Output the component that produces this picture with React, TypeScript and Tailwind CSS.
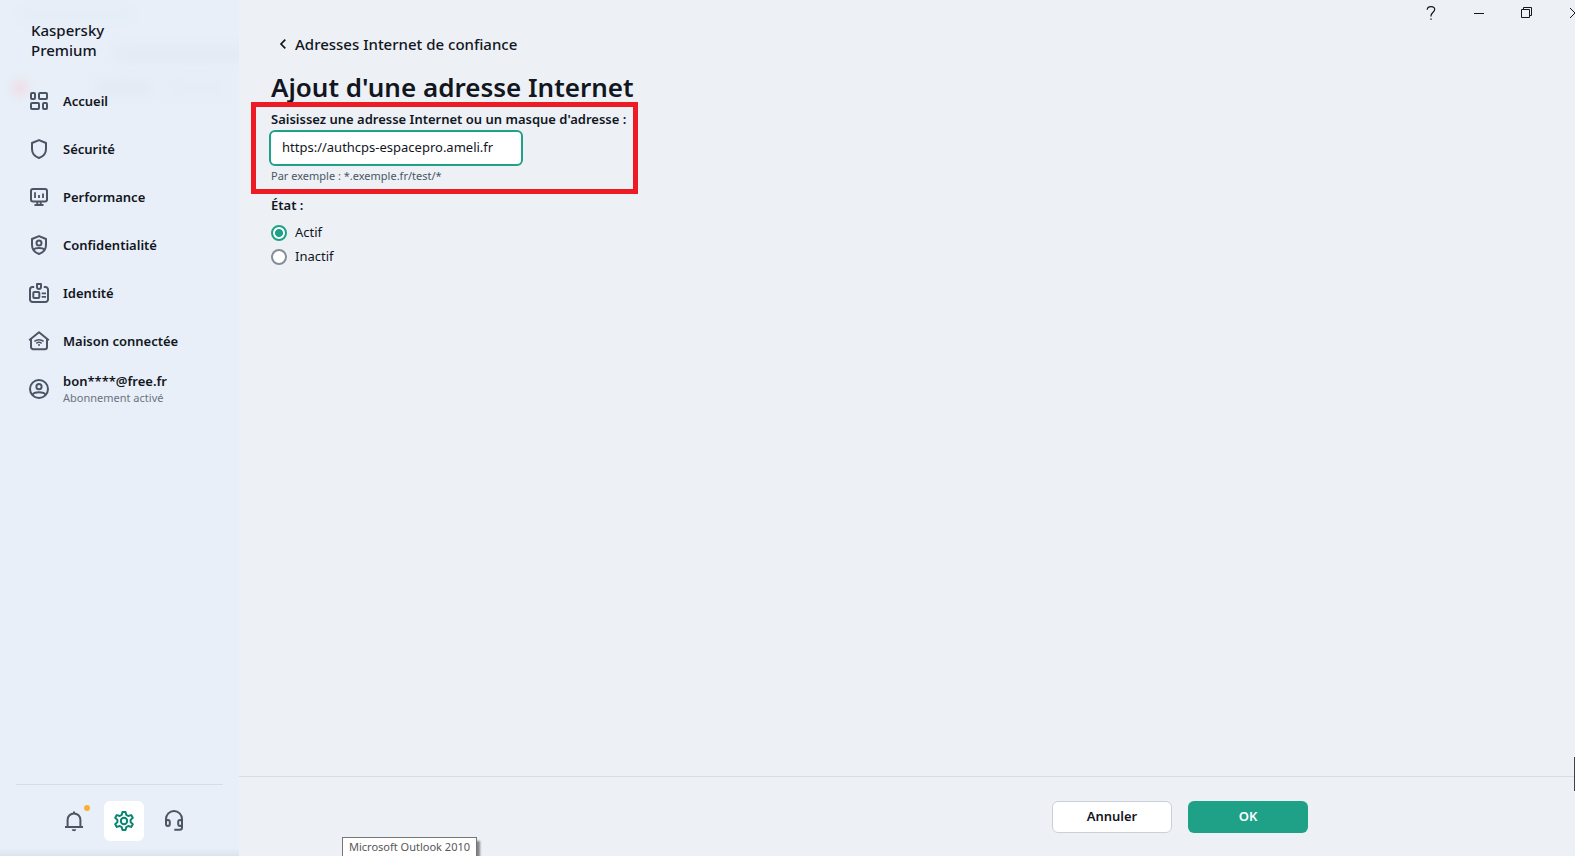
import { useState, type ReactNode } from "react";

const FONT = "font-['Noto_Sans','Open_Sans',sans-serif]";

function Icon({ children }: { children: ReactNode }) {
  return (
    <svg
      viewBox="0 0 24 24"
      className="size-6 shrink-0"
      fill="none"
      stroke="currentColor"
      strokeWidth="2"
      strokeLinejoin="round"
      aria-hidden="true"
    >
      {children}
    </svg>
  );
}

const HomeIcon = () => (
  <Icon>
    <rect x="4" y="4" width="4" height="6" rx="1" />
    <rect x="12" y="4" width="8" height="6" rx="1" />
    <rect x="4" y="14" width="8" height="6" rx="1" />
    <rect x="16" y="14" width="4" height="6" rx="1" />
  </Icon>
);

const SHIELD = "M12 3.1 L19 6 V12 C19 16.5 16 19.6 12 21 C8 19.6 5 16.5 5 12 V6 Z";

const ShieldIcon = () => (
  <Icon>
    <path d={SHIELD} />
  </Icon>
);

const MonitorIcon = () => (
  <Icon>
    <rect x="4" y="4" width="16" height="12.6" rx="2" />
    <path d="M8 7.3V13M12 10V13M16 8.5V13" strokeWidth="1.8" />
    <path d="M10.3 17V20M13.7 17V20M7.5 20H16.5" strokeWidth="1.9" />
  </Icon>
);

const PrivacyIcon = () => (
  <Icon>
    <path d={SHIELD} />
    <circle cx="12" cy="10" r="2.5" />
    <path d="M6.2 16.8C8.5 14.4 15.5 14.4 17.8 16.8" />
  </Icon>
);

const IdentityIcon = () => (
  <Icon>
    <path d="M7.2 6H5.5A2.5 2.5 0 0 0 3 8.5V18.5A2.5 2.5 0 0 0 5.5 21H18.5A2.5 2.5 0 0 0 21 18.5V8.5A2.5 2.5 0 0 0 18.5 6H16.8" />
    <path d="M10 3H14V6C14 7.2 13.2 8 12 8S10 7.2 10 6Z" />
    <rect x="6.3" y="11" width="6" height="6" rx="1" />
    <path d="M14.7 12.3H19M14.7 15.8H19" strokeWidth="1.8" />
  </Icon>
);

const SmartHomeIcon = () => (
  <Icon>
    <path d="M2.2 11.2L12 3.3L21.8 11.2M4 10V18A2.2 2.2 0 0 0 6.2 20.2H17.8A2.2 2.2 0 0 0 20 18V10" />
    <path d="M7.4 12.4C10 10.1 14 10.1 16.6 12.4M9.3 14.4C10.9 13.1 13.1 13.1 14.7 14.4" strokeWidth="1.5" />
    <circle cx="12" cy="16.1" r="1" fill="currentColor" stroke="none" />
  </Icon>
);

const AccountIcon = () => (
  <Icon>
    <circle cx="12" cy="12" r="9" />
    <circle cx="12" cy="9.7" r="2.6" />
    <path d="M5.5 17.8C7 14.4 17 14.4 18.5 17.8" />
  </Icon>
);

const BellIcon = () => (
  <Icon>
    <path d="M12 2.4V4.4M3 18H21M5.6 18V10.8A6.4 6.4 0 0 1 18.4 10.8V18" />
    <path d="M9.8 20.2H14.2A2.2 2 0 0 1 9.8 20.2Z" fill="currentColor" stroke="none" />
  </Icon>
);

const GearIcon = () => (
  <Icon>
    <path
      strokeWidth="2"
      d="M10.5 2.9H13.5L14.3 5.9L16.2 7L19.2 6.1L20.8 8.8L18.6 10.9V13.1L20.8 15.2L19.2 17.9L16.2 17L14.3 18.1L13.5 21.1H10.5L9.7 18.1L7.8 17L4.8 17.9L3.2 15.2L5.4 13.1V10.9L3.2 8.8L4.8 6.1L7.8 7L9.7 5.9Z"
    />
    <circle cx="12" cy="12" r="3.2" />
  </Icon>
);

const HeadsetIcon = () => (
  <Icon>
    <path d="M4 14V10A8 8 0 0 1 20 10V18.5A2.3 2.3 0 0 1 17.7 20.8H12.3" />
    <rect x="4" y="11" width="3.8" height="6" rx="1.9" />
    <rect x="16.2" y="11" width="3.8" height="6" rx="1.9" />
  </Icon>
);

const NAV = [
  { label: "Accueil", icon: <HomeIcon /> },
  { label: "Sécurité", icon: <ShieldIcon /> },
  { label: "Performance", icon: <MonitorIcon /> },
  { label: "Confidentialité", icon: <PrivacyIcon /> },
  { label: "Identité", icon: <IdentityIcon /> },
  { label: "Maison connectée", icon: <SmartHomeIcon /> },
  { label: "bon****@free.fr", note: "Abonnement activé", icon: <AccountIcon /> },
];

function Sidebar() {
  return (
    <aside className="relative flex w-[239px] shrink-0 flex-col overflow-hidden bg-[#e8eff8]">
      <div aria-hidden="true" className="pointer-events-none absolute inset-0">
        <div className="absolute top-2 left-5 h-3 w-28 rounded-full bg-[#e4edf7] blur-[4px]" />
        <div className="absolute top-11 left-28 h-5 w-36 rounded-full bg-[#e4ebf4] blur-[4px]" />
        <div className="absolute top-20 left-3 size-4 rounded-full bg-[#f0dde4] blur-[5px]" />
        <div className="absolute top-20 left-24 h-4 w-14 rounded-full bg-[#e4eaf3] blur-[5px]" />
        <div className="absolute top-20 left-42 h-4 w-14 rounded-full bg-[#e5ecf5] blur-[5px]" />
        <div className="absolute inset-x-0 bottom-0 h-2 bg-linear-to-t from-[#dbe3ed] to-transparent" />
      </div>
      <div className="relative flex grow flex-col">
        <p className="px-[31px] pt-5 pb-[17px] text-[15px] leading-5 font-medium">
          Kaspersky
          <br />
          Premium
        </p>
        <nav className="flex flex-col">
          {NAV.map((item) => (
            <a key={item.label} href="#" className="flex h-12 items-center gap-3 pl-[27px]">
              <span className="text-[#4b5563]">{item.icon}</span>
              <span className="flex flex-col">
                <span className="text-[13px] leading-[18px] font-semibold">{item.label}</span>
                {item.note && <span className="text-[11px] leading-4 text-[#6b737f]">{item.note}</span>}
              </span>
            </a>
          ))}
        </nav>
        <div className="mx-4 mt-auto flex items-center justify-center gap-[10px] border-t border-[#d3deeb] pt-4 pb-[15px] pl-2 text-[#4b5563]">
          <button type="button" aria-label="Notifications" className="relative flex size-10 items-center justify-center">
            <BellIcon />
            <span className="absolute top-1 right-1 size-[6px] rounded-full bg-[#fbb033]" />
          </button>
          <button type="button" aria-label="Paramètres" className="flex size-10 items-center justify-center rounded-md bg-white text-[#078571]">
            <GearIcon />
          </button>
          <button type="button" aria-label="Assistance" className="flex size-10 items-center justify-center">
            <HeadsetIcon />
          </button>
        </div>
      </div>
    </aside>
  );
}

function WindowControls() {
  return (
    <div className="absolute top-0 right-0 flex h-[26px] overflow-hidden">
      <button type="button" aria-label="Aide" className="flex w-12 items-center justify-center">
        <svg viewBox="0 0 10 14" className="h-[14px] w-[10px]" fill="none" stroke="currentColor" strokeWidth="1.2" aria-hidden="true">
          <path d="M1.2 3.8C1.2 1.7 2.8 .6 5 .6S8.7 1.7 8.7 3.6C8.7 6 5 6.6 5 9.8V10.4" />
          <path d="M5 12.4V13.8" strokeWidth="1.4" />
        </svg>
      </button>
      <button type="button" aria-label="Réduire" className="flex w-12 items-center justify-center">
        <svg viewBox="0 0 10 10" className="size-[10px]" stroke="currentColor" aria-hidden="true">
          <path d="M0 5.5H10" />
        </svg>
      </button>
      <button type="button" aria-label="Restaurer" className="flex w-12 items-center justify-center">
        <svg viewBox="0 0 12 12" className="size-3" fill="none" stroke="currentColor" aria-hidden="true">
          <path d="M.5 2.5H8.5V10.5H.5ZM2.5 2.5V.5H10.5V8.5H8.5" />
        </svg>
      </button>
      <button type="button" aria-label="Fermer" className="flex w-6 items-center justify-end overflow-hidden">
        <svg viewBox="0 0 5 10" className="h-[10px] w-[5px]" fill="none" stroke="currentColor" aria-hidden="true">
          <path d="M0 0L5 5L0 10" />
        </svg>
      </button>
    </div>
  );
}

export default function App() {
  const [address, setAddress] = useState("https://authcps-espacepro.ameli.fr");
  const [state, setState] = useState("Actif");

  return (
    <div className={`${FONT} relative flex min-h-screen overflow-hidden bg-[#edf1f6] text-[#12161e]`}>
      <Sidebar />
      <main className="relative flex grow flex-col">
        <WindowControls />
        <form className="flex grow flex-col" onSubmit={(e) => e.preventDefault()}>
          <div className="flex grow flex-col items-start pt-8 pl-8">
            <a href="#" className="flex items-center gap-2 pl-2 text-[15px] leading-6 font-medium">
              <svg viewBox="0 0 8 10" className="h-[10px] w-2" fill="none" stroke="currentColor" strokeWidth="1.7" aria-hidden="true">
                <path d="M6.3 .6L2 5L6.3 9.4" />
              </svg>
              Adresses Internet de confiance
            </a>
            <h1 className="pt-[13px] text-[26px] leading-9 font-semibold">Ajout d'une adresse Internet</h1>
            <div className="relative flex flex-col items-start pt-1">
              <label htmlFor="address" className="text-[13px] leading-5 font-semibold">
                Saisissez une adresse Internet ou un masque d'adresse :
              </label>
              <input
                id="address"
                type="text"
                value={address}
                onChange={(e) => setAddress(e.target.value)}
                className="-ml-[2px] mt-px h-9 w-[254px] rounded-md border-2 border-[#1fa188] bg-white px-[11px] pb-[2px] text-[13px] outline-none"
              />
              <p className="pt-[2px] text-[11px] leading-4 text-[#4b5563]">Par exemple : *.exemple.fr/test/*</p>
              <div aria-hidden="true" className="pointer-events-none absolute -top-[3px] -right-3 -bottom-[10px] -left-5 border-[5px] border-[#ed1c24]" />
            </div>
            <fieldset className="flex flex-col pt-[11px]">
              <legend className="float-left pb-[6px] text-[13px] leading-5 font-semibold">État :</legend>
              {["Actif", "Inactif"].map((option) => (
                <label key={option} className="flex h-6 items-center gap-2 text-[13px]">
                  <input
                    type="radio"
                    name="state"
                    checked={state === option}
                    onChange={() => setState(option)}
                    className="size-4 appearance-none rounded-full border-2 border-[#858d99] bg-white checked:border-[#1fa188] checked:bg-[radial-gradient(circle,#1fa188_3.6px,white_4.4px)]"
                  />
                  {option}
                </label>
              ))}
            </fieldset>
          </div>
          <footer className="flex justify-end gap-4 border-t border-[#d3deeb] pt-6 pr-[267px] pb-[23px]">
            <button type="button" className="h-8 w-[120px] rounded-md border border-[#c9d0dc] bg-white text-[13px] font-semibold">
              Annuler
            </button>
            <button type="submit" className="h-8 w-[120px] rounded-md bg-[#1fa188] text-[13px] font-semibold text-white">
              OK
            </button>
          </footer>
        </form>
        <div aria-hidden="true" className="absolute right-0 bottom-[65px] h-[34px] w-px bg-[#3d4148]" />
      </main>
      <div
        role="tooltip"
        className="absolute bottom-0 left-[342px] h-[19px] border border-b-0 border-[#767676] bg-white px-[6px] text-[11px] leading-[18px] whitespace-nowrap text-[#575757] shadow-[3px_4px_2px_rgba(0,0,0,0.45)]"
      >
        Microsoft Outlook 2010
      </div>
    </div>
  );
}
